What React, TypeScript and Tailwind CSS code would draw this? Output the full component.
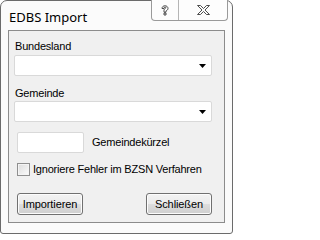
import React from 'react';

const sys = { fontFamily: '"Liberation Sans", Arial, sans-serif' };

function Combo() {
  return (
    <div className="ml-[5px] w-[198px] h-[21px] border border-[#d9d9d9] bg-white rounded-[2px] flex items-center justify-end pr-[5px]">
      <svg width="7" height="4" viewBox="0 0 7 4">
        <path d="M0 0h7L3.5 4z" fill="#000" />
      </svg>
    </div>
  );
}

function WinButton({ label }: { label: string }) {
  return (
    <button
      className="h-[22px] w-[66px] rounded-[3px] border border-[#707070] text-[11px] leading-[14px] tracking-[-0.1px] text-black bg-[linear-gradient(#f2f2f2_0%,#ebebeb_50%,#dddddd_50%,#cfcfcf_100%)] shadow-[inset_0_0_0_1px_#fcfcfc] whitespace-nowrap"
      style={sys}
    >
      {label}
    </button>
  );
}

export default function App() {
  return (
    <div className="w-[233px] h-[234px] border border-[#6b6b6b] rounded-t-[7px] rounded-b-[3px] bg-[#fbfbfb] flex flex-col px-[7px] pb-[10px]">
      {/* Title bar */}
      <div className="h-[29px] flex items-start relative">
        <span className="mt-[9px] ml-[1px] text-[13px] leading-[14px] text-black whitespace-nowrap" style={{ fontFamily: '"Noto Sans", "Open Sans", sans-serif' }}>
          EDBS Import
        </span>
        <div className="absolute right-[-3px] top-[-1px] flex h-[21px] border border-t-0 border-[#9a9a9a] rounded-b-[4px] bg-[#fdfdfd]">
          <div className="w-[27px] flex items-center justify-center border-r border-[#b5b5b5]">
            <svg width="8" height="11" viewBox="0 0 8 11">
              <path d="M1 3.5C1 1.8 2.3 0.8 4 0.8s3 1 3 2.6c0 1.4-1 1.9-2 2.5v1.3H3V5.2c0-1 .9-1.5 1.6-2 .4-.3.4-1.1-.6-1.1-.7 0-1 .5-1 1.4z M3 8h2v2H3z" fill="none" stroke="#3a3a3a" strokeWidth="0.9" />
            </svg>
          </div>
          <div className="w-[48px] flex items-center justify-center">
            <svg width="13" height="10" viewBox="0 0 13 10">
              <path d="M0.5 0.5h3l3 3 3-3h3l-4.5 4.5 4.5 4.5h-3l-3-3-3 3h-3L5 5z" fill="none" stroke="#3a3a3a" strokeWidth="0.9" strokeLinejoin="round" />
            </svg>
          </div>
        </div>
      </div>

      {/* Client area */}
      <div className="flex-1 border border-[#8c8c8c] bg-[#f0f0f0] flex flex-col text-[11px] tracking-[-0.2px] text-black whitespace-nowrap" style={sys}>
        <div className="mt-[9px] ml-[6px] leading-[13px]">Bundesland</div>
        <div className="mt-[2px]"><Combo /></div>
        <div className="mt-[11px] ml-[6px] leading-[13px]">Gemeinde</div>
        <div className="mt-[1px]"><Combo /></div>
        <div className="mt-[10px] ml-[8px] flex items-center">
          <div className="w-[67px] h-[21px] bg-white border border-[#d9d9d9] rounded-[2px]" />
          <span className="ml-[8px] leading-[13px]">Gemeindekürzel</span>
        </div>
        <label className="mt-[10px] ml-[8px] flex items-center h-[13px]">
          <span className="w-[13px] h-[13px] border border-[#8f8f8f] bg-[linear-gradient(135deg,#dcdcdc,#fbfbfb)] shadow-[inset_0_0_0_1px_#f4f4f4] shrink-0" />
          <span className="ml-[3px] leading-[13px]">Ignoriere Fehler im BZSN Verfahren</span>
        </label>
        <div className="mt-[17px] flex justify-between pl-[8px] pr-[12px]">
          <WinButton label="Importieren" />
          <WinButton label="Schließen" />
        </div>
      </div>
    </div>
  );
}
